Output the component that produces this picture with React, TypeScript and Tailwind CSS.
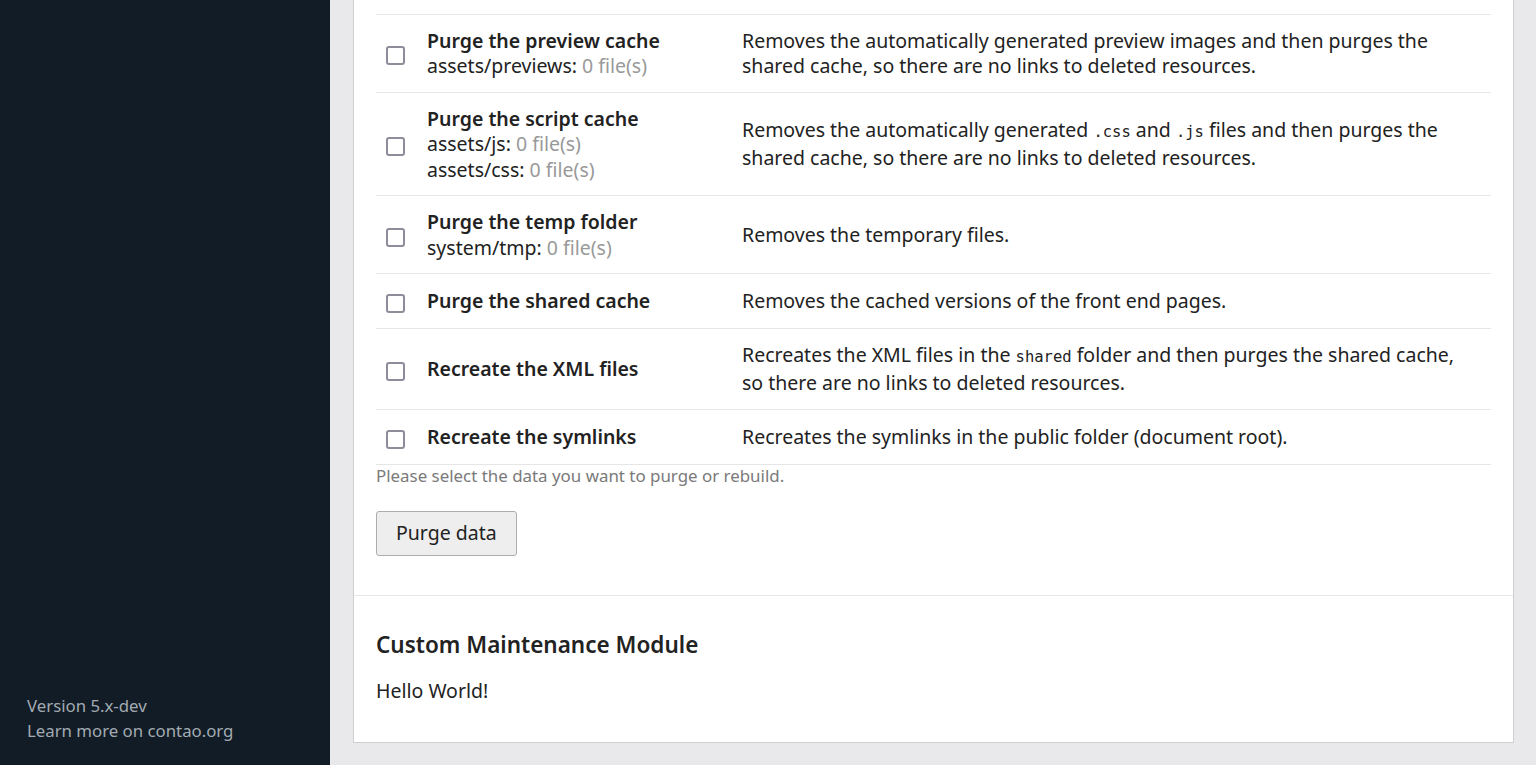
import type { ReactNode } from 'react'

interface PurgeJob {
  label: string
  paths: { path: string; count: string }[]
  description: ReactNode
}

const Code = ({ children }: { children: ReactNode }) => (
  <code className="font-['DejaVu_Sans_Mono','Liberation_Mono',monospace] text-[15.5px] leading-[26px]">{children}</code>
)

const jobs: PurgeJob[] = [
  {
    label: 'Purge the image cache',
    paths: [{ path: 'assets/images', count: '0 file(s)' }],
    description:
      'Removes the automatically generated images and then purges the shared cache, so there are no links to deleted resources.',
  },
  {
    label: 'Purge the preview cache',
    paths: [{ path: 'assets/previews', count: '0 file(s)' }],
    description:
      'Removes the automatically generated preview images and then purges the shared cache, so there are no links to deleted resources.',
  },
  {
    label: 'Purge the script cache',
    paths: [
      { path: 'assets/js', count: '0 file(s)' },
      { path: 'assets/css', count: '0 file(s)' },
    ],
    description: (
      <>
        Removes the automatically generated <Code>.css</Code> and <Code>.js</Code> files and then purges the shared
        cache, so there are no links to deleted resources.
      </>
    ),
  },
  {
    label: 'Purge the temp folder',
    paths: [{ path: 'system/tmp', count: '0 file(s)' }],
    description: 'Removes the temporary files.',
  },
  {
    label: 'Purge the shared cache',
    paths: [],
    description: 'Removes the cached versions of the front end pages.',
  },
  {
    label: 'Recreate the XML files',
    paths: [],
    description: (
      <>
        Recreates the XML files in the <Code>shared</Code> folder and then purges the shared cache, so there are no
        links to deleted resources.
      </>
    ),
  },
  {
    label: 'Recreate the symlinks',
    paths: [],
    description: 'Recreates the symlinks in the public folder (document root).',
  },
]

function JobRow({ job }: { job: PurgeJob }) {
  return (
    <div className="flex items-center border-b border-[#e6e6e6] min-h-[55px] py-[13px]">
      <div className="w-[51px] flex-shrink-0 flex items-center pl-[10px] pt-[5px]">
        <span className="block w-[19px] h-[19px] border-2 border-[#8e8c9b] rounded-[3px] bg-white" />
      </div>
      <div className="w-[315px] flex-shrink-0">
        <div className="font-semibold">{job.label}</div>
        {job.paths.map((p) => (
          <div key={p.path}>
            {p.path}: <span className="text-[#999]">{p.count}</span>
          </div>
        ))}
      </div>
      <div className="flex-1 pr-[20px]">{job.description}</div>
    </div>
  )
}

export default function App() {
  return (
    <div className="flex h-[765px] overflow-hidden bg-[#e9e9ec] font-['Noto_Sans','Open_Sans',sans-serif] text-[19.5px] leading-[25.5px] text-[#222]">
      {/* Sidebar */}
      <aside className="w-[330px] flex-shrink-0 bg-[#111c26] flex flex-col justify-end pb-[22px] pl-[27px] text-[16.8px] leading-[25px] text-[#a3abb2]">
        <p>Version 5.x-dev</p>
        <p>Learn more on contao.org</p>
      </aside>

      {/* Main */}
      <main className="flex-1 flex flex-col justify-end pl-[23px] pr-[22px] pb-[22px]">
        <div className="bg-white border border-[#cfcfd2]">
          <div className="px-[22px] pb-[39px]">
            <div className="border-t border-[#e6e6e6]">
              {jobs.map((job) => (
                <JobRow key={job.label} job={job} />
              ))}
            </div>
            <p className="text-[16.9px] text-[#7a7a7a] leading-[22px]">
              Please select the data you want to purge or rebuild.
            </p>
            <button className="mt-[24px] h-[45px] px-[19px] bg-[#eeeeee] border border-[#adadad] rounded-[3px] text-[19.5px] text-[#222]">
              Purge data
            </button>
          </div>
          <div className="border-t border-[#e6e6e6] px-[22px] pt-[34px] pb-[39px]">
            <h2 className="text-[22.5px] font-semibold leading-[30px]">Custom Maintenance Module</h2>
            <p className="mt-[18px]">Hello World!</p>
          </div>
        </div>
      </main>
    </div>
  )
}
